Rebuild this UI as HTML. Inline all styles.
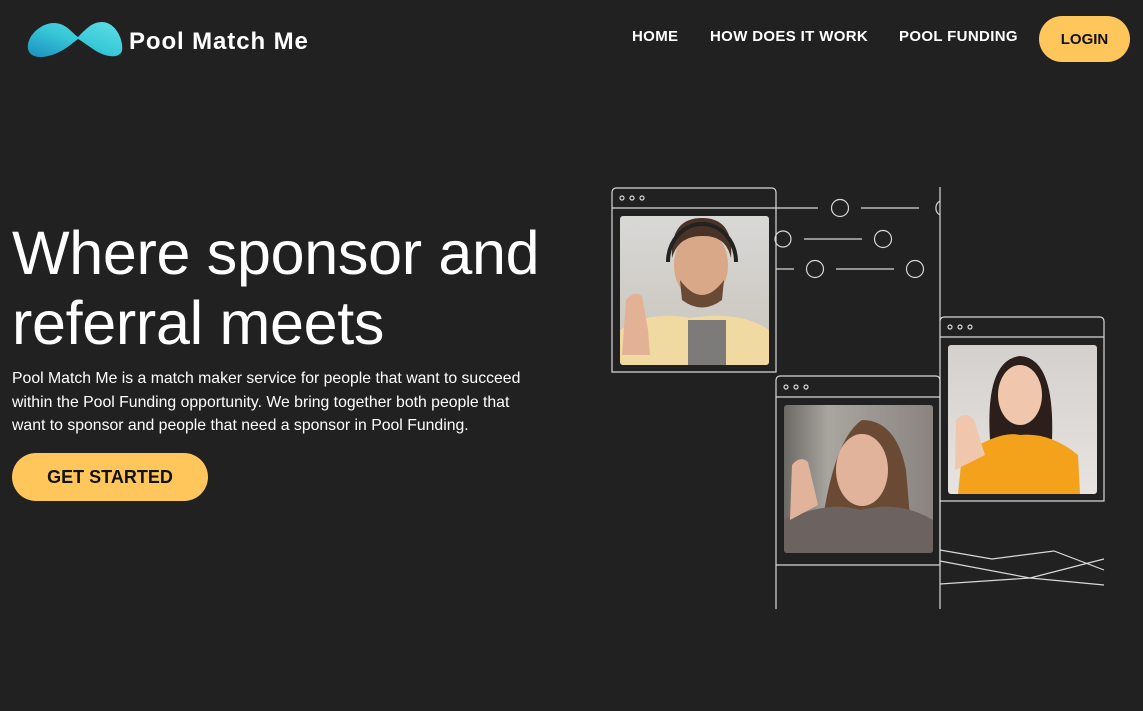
<!DOCTYPE html>
<html><head><meta charset="utf-8"><style>
*{margin:0;padding:0;box-sizing:border-box}
body{width:1143px;height:711px;background:#212121;font-family:"Liberation Sans",sans-serif;color:#fff;position:relative;overflow:hidden}
.abs{position:absolute}
.nav a{position:absolute;top:28px;font-weight:bold;font-size:15px;color:#fff;text-decoration:none;letter-spacing:0.35px}
.btn{background:#ffc65c;color:#111;font-weight:bold;display:flex;align-items:center;justify-content:center}
h1{position:absolute;left:12px;top:218px;font-size:61px;font-weight:normal;line-height:70px;letter-spacing:-0.3px;width:620px}
p{position:absolute;left:12px;top:367px;font-size:15.8px;line-height:23.5px;white-space:nowrap}
</style></head><body>
<svg class="abs" style="left:26px;top:19px" width="98" height="40" viewBox="0 0 98 40">
<defs><linearGradient id="lg" x1="0" y1="1" x2="1" y2="0"><stop offset="0" stop-color="#1a8fc0"/><stop offset=".5" stop-color="#38c8d8"/><stop offset="1" stop-color="#5fe0e6"/></linearGradient></defs>
<path d="M2 30 C0 18 14 4 28 4 C40 4 46 14 52 18 C60 10 66 3 76 3 C90 3 98 22 96 32 C93 40 80 38 70 32 C62 27 56 22 52 20 C44 26 36 34 22 37 C10 40 3 36 2 30Z" fill="url(#lg)"/></svg>
<div class="abs" style="left:129px;top:28px;font-size:24px;font-weight:bold;letter-spacing:0.9px">Pool Match Me</div>
<div class="nav"><a style="left:632px">HOME</a><a style="left:710px">HOW DOES IT WORK</a><a style="left:899px">POOL FUNDING</a></div>
<div class="abs btn" style="left:1039px;top:16px;width:91px;height:46px;border-radius:23px;font-size:15px">LOGIN</div>
<h1>Where sponsor and referral meets</h1>
<p>Pool Match Me is a match maker service for people that want to succeed<br>within the Pool Funding opportunity. We bring together both people that<br>want to sponsor and people that need a sponsor in Pool Funding.</p>
<div class="abs btn" style="left:12px;top:453px;width:196px;height:48px;border-radius:24px;font-size:18px">GET STARTED</div>
<svg class="abs" style="left:0;top:0" width="1143" height="711" viewBox="0 0 1143 711">
<defs>
<linearGradient id="p1" x1="0" y1="0" x2="0" y2="1"><stop offset="0" stop-color="#d8d8d6"/><stop offset="1" stop-color="#c9c4bb"/></linearGradient>
<linearGradient id="p2" x1="0" y1="0" x2="1" y2="0"><stop offset="0" stop-color="#6c6a66"/><stop offset=".3" stop-color="#a9a59f"/><stop offset="1" stop-color="#8a8480"/></linearGradient>
<linearGradient id="p3" x1="0" y1="0" x2="0" y2="1"><stop offset="0" stop-color="#d4d0ce"/><stop offset="1" stop-color="#e6e3e0"/></linearGradient>
<clipPath id="c1"><rect x="620" y="216" width="149" height="149" rx="3"/></clipPath>
<clipPath id="c2"><rect x="784" y="405" width="149" height="148" rx="3"/></clipPath>
<clipPath id="c3"><rect x="948" y="345" width="149" height="149" rx="3"/></clipPath>
</defs>
<g fill="none" stroke="#d8d8d8" stroke-width="1.2">
<path d="M612 372V192a4 4 0 0 1 4-4h156a4 4 0 0 1 4 4v180Z"/><path d="M612 208H818M861 208H919"/>
<path d="M776 609V380a4 4 0 0 1 4-4h156a4 4 0 0 1 4 4v185H776"/><path d="M776 397H940"/>
<path d="M940 187V609M940 501H1104V321a4 4 0 0 0-4-4H944a4 4 0 0 0-4 4"/><path d="M940 337H1104"/>
<circle cx="840" cy="208" r="8.5"/><path d="M940 201a8 8 0 0 0 0 14"/>
<circle cx="783" cy="239" r="8"/><circle cx="883" cy="239" r="8.5"/><path d="M804 239H862M776 269H794M836 269H894"/>
<circle cx="815" cy="269" r="8.5"/><circle cx="915" cy="269" r="8.5"/>
<path d="M940 550L992 559L1054 551L1104 570M940 561L1030 578L1104 585M940 584L1030 578L1104 559"/>
<circle cx="622" cy="198" r="2"/><circle cx="632" cy="198" r="2"/><circle cx="642" cy="198" r="2"/>
<circle cx="786" cy="387" r="2"/><circle cx="796" cy="387" r="2"/><circle cx="806" cy="387" r="2"/>
<circle cx="950" cy="327" r="2"/><circle cx="960" cy="327" r="2"/><circle cx="970" cy="327" r="2"/>
</g>
<g clip-path="url(#c1)"><rect x="620" y="216" width="149" height="149" fill="url(#p1)"/>
<path d="M620 365V330Q650 310 690 318Q740 310 769 330V365Z" fill="#f1d9a2"/><rect x="688" y="320" width="38" height="45" fill="#7d7b79"/>
<ellipse cx="701" cy="265" rx="27" ry="36" fill="#d9a888"/><path d="M672 258Q670 218 702 218Q734 218 731 258Q726 235 702 236Q678 236 672 258Z" fill="#4a3326"/>
<path d="M680 280Q702 310 724 280L722 300Q702 315 682 300Z" fill="#6b4a35"/><path d="M668 262a34 38 0 0 1 68 0" stroke="#222" stroke-width="4" fill="none"/>
<path d="M622 355L626 300Q634 290 642 296L648 330L650 355Z" fill="#e3b296"/></g>
<g clip-path="url(#c2)"><rect x="784" y="405" width="149" height="148" fill="url(#p2)"/>
<path d="M820 540Q832 440 862 420Q896 420 906 470L912 540Z" fill="#6b4a35"/>
<ellipse cx="862" cy="470" rx="26" ry="36" fill="#e2b39b"/><path d="M784 553V520Q830 500 860 510Q900 500 933 520V553Z" fill="#6c6260"/>
<path d="M790 520L792 465Q800 455 808 462L818 505Z" fill="#e2b39b"/></g>
<g clip-path="url(#c3)"><rect x="948" y="345" width="149" height="149" fill="url(#p3)"/>
<path d="M990 440Q985 360 1020 356Q1055 358 1052 440Z" fill="#2c1e1a"/>
<ellipse cx="1020" cy="395" rx="22" ry="30" fill="#f0c6ac"/>
<path d="M958 494L962 455Q1000 430 1020 435Q1050 432 1078 455L1080 494Z" fill="#f4a11b"/>
<path d="M955 470L956 420Q966 410 974 420L985 455Z" fill="#f0c6ac"/></g>
</svg>
</body></html>
